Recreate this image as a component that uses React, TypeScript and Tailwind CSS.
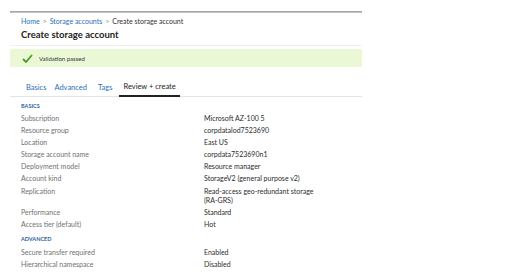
import React from "react";

const basics: [string, string[]][] = [
  ["Subscription", ["Microsoft AZ-100 5"]],
  ["Resource group", ["corpdatalod7523690"]],
  ["Location", ["East US"]],
  ["Storage account name", ["corpdata7523690n1"]],
  ["Deployment model", ["Resource manager"]],
  ["Account kind", ["StorageV2 (general purpose v2)"]],
  ["Replication", ["Read-access geo-redundant storage", "(RA-GRS)"]],
  ["Performance", ["Standard"]],
  ["Access tier (default)", ["Hot"]],
];

const advanced: [string, string[]][] = [
  ["Secure transfer required", ["Enabled"]],
  ["Hierarchical namespace", ["Disabled"]],
];

function Row({ label, value }: { label: string; value: string[] }) {
  return (
    <div className="flex text-[7px] leading-[9px] pb-[3.1px]">
      <div className="w-[183px] text-[#707070]">{label}</div>
      <div className="text-[#2b2b2b]">
        {value.map((v) => (
          <div key={v}>{v}</div>
        ))}
      </div>
    </div>
  );
}

export default function App() {
  return (
    <div
      className="w-[531px] h-[278px] bg-white overflow-hidden"
      style={{ fontFamily: 'Lato, "Open Sans", sans-serif' }}
    >
      <div className="ml-[10px] w-[352px] pt-[11px]">
        <div className="h-[2px] bg-gradient-to-b from-[#9a9a9a] to-[#d0d0d0]" />
        <div className="pl-[11px] pt-[3px] text-[7px] leading-[10px] flex gap-[3px] items-center">
          <span className="text-[#2a6fb8]">Home</span>
          <span className="text-[#888]">&gt;</span>
          <span className="text-[#2a6fb8]">Storage accounts</span>
          <span className="text-[#888]">&gt;</span>
          <span className="text-[#333]">Create storage account</span>
        </div>
        <div className="pl-[11px] pt-[2px] text-[9.5px] leading-[14px] font-bold text-[#222]">
          Create storage account
        </div>
        <div className="mt-[3px] h-px bg-[#f0f0f0]" />
        <div className="mt-[3px] h-[18px] bg-[#ebf8d6] flex items-center pl-[12px] gap-[6px]">
          <svg width="11" height="9" viewBox="0 0 11 9">
            <path d="M1 5 L4 8 L10 1" fill="none" stroke="#4c9a1e" strokeWidth="1.8" />
          </svg>
          <span className="text-[6px] text-[#333]">Validation passed</span>
        </div>
        <div className="mt-[15px] flex items-end border-b border-[#e4e4e4] pl-[16px] text-[7.5px] leading-[10px]">
          <span className="text-[#2a6fb8] pb-[3px] mr-[8px]">Basics</span>
          <span className="text-[#2a6fb8] pb-[3px] mr-[11px]">Advanced</span>
          <span className="text-[#2a6fb8] pb-[3px] mr-[7px]">Tags</span>
          <span className="text-[#222] pb-[3px] px-[4px] border-b-2 border-[#222] -mb-px">Review + create</span>
        </div>
        <div className="pl-[11px] pt-[5px]">
          <div className="text-[5.5px] font-bold text-[#2a5f9e] leading-[8px] mb-[4px]">BASICS</div>
          {basics.map(([l, v]) => (
            <Row key={l} label={l} value={v} />
          ))}
          <div className="text-[5.5px] font-bold text-[#2a5f9e] leading-[8px] mt-[3px] mb-[5px]">ADVANCED</div>
          {advanced.map(([l, v]) => (
            <Row key={l} label={l} value={v} />
          ))}
        </div>
      </div>
    </div>
  );
}
